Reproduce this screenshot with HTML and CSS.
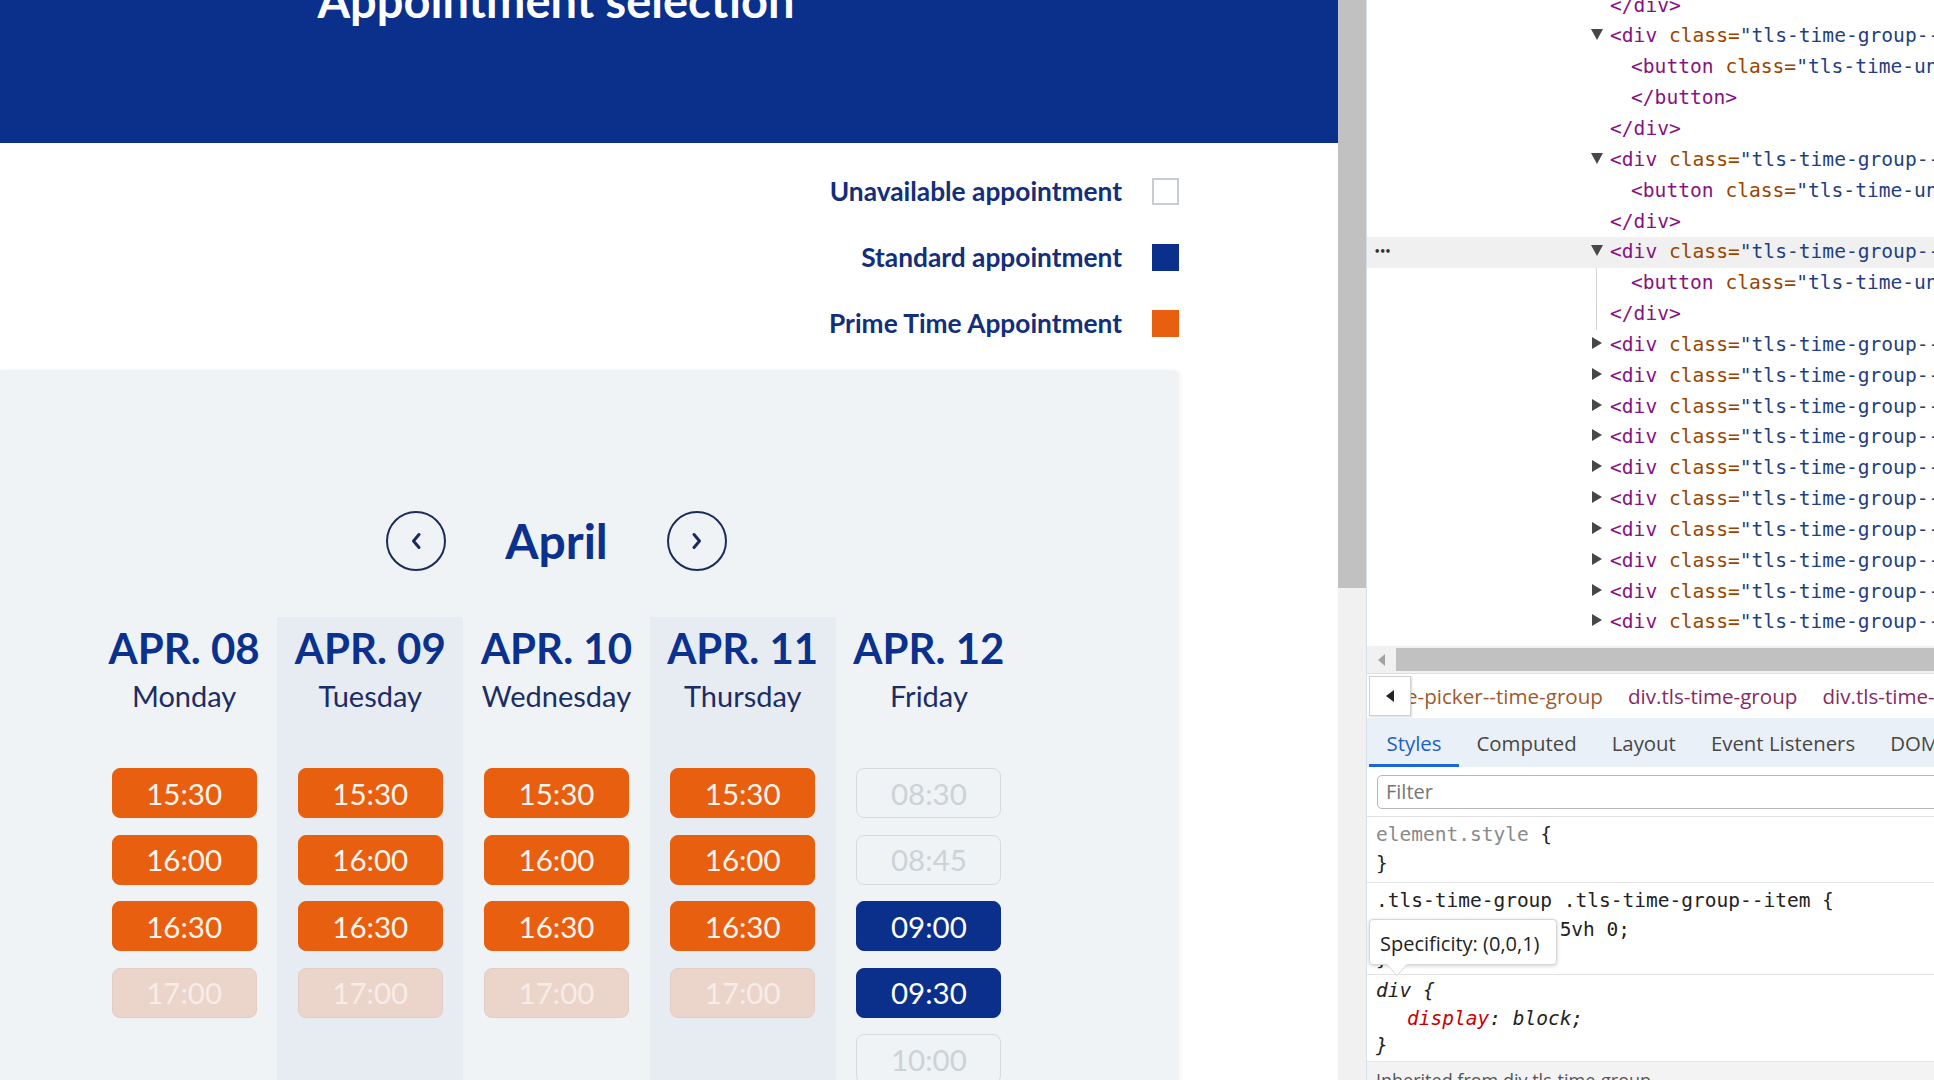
FILE: index.html
```html
<!DOCTYPE html>
<html lang="en">
<head>
<meta charset="utf-8">
<title>Appointment selection</title>
<link rel="stylesheet" href="styles.css">
</head>
<body>
<div class="site">
  <header class="header">
    <h1 class="header-title">Appointment selection</h1>
  </header>
  <div class="legend">
    <div class="legend-row"><span>Unavailable appointment</span><span class="swatch swatch-unavail"></span></div>
    <div class="legend-row"><span>Standard appointment</span><span class="swatch swatch-standard"></span></div>
    <div class="legend-row"><span>Prime Time Appointment</span><span class="swatch swatch-prime"></span></div>
  </div>
  <section class="panel">
    <div class="panel-inner">
      <div class="month-nav">
        <button class="nav-btn" aria-label="Previous month"><svg width="14" height="20" viewBox="0 0 14 20"><polyline points="10,3.5 4.5,10 10,16.5" fill="none" stroke="#1b2a5c" stroke-width="3" stroke-linecap="round" stroke-linejoin="round"/></svg></button>
        <div class="month">April</div>
        <button class="nav-btn" aria-label="Next month"><svg width="14" height="20" viewBox="0 0 14 20"><polyline points="4,3.5 9.5,10 4,16.5" fill="none" stroke="#1b2a5c" stroke-width="3" stroke-linecap="round" stroke-linejoin="round"/></svg></button>
      </div>
      <div class="days">
        <div class="day">
          <div class="date">APR. 08</div>
          <div class="weekday">Monday</div>
          <div class="slots">
            <button class="slot prime">15:30</button>
            <button class="slot prime">16:00</button>
            <button class="slot prime">16:30</button>
            <button class="slot prime-off">17:00</button>
          </div>
        </div>
        <div class="day alt">
          <div class="date">APR. 09</div>
          <div class="weekday">Tuesday</div>
          <div class="slots">
            <button class="slot prime">15:30</button>
            <button class="slot prime">16:00</button>
            <button class="slot prime">16:30</button>
            <button class="slot prime-off">17:00</button>
          </div>
        </div>
        <div class="day">
          <div class="date">APR. 10</div>
          <div class="weekday">Wednesday</div>
          <div class="slots">
            <button class="slot prime">15:30</button>
            <button class="slot prime">16:00</button>
            <button class="slot prime">16:30</button>
            <button class="slot prime-off">17:00</button>
          </div>
        </div>
        <div class="day alt">
          <div class="date">APR. 11</div>
          <div class="weekday">Thursday</div>
          <div class="slots">
            <button class="slot prime">15:30</button>
            <button class="slot prime">16:00</button>
            <button class="slot prime">16:30</button>
            <button class="slot prime-off">17:00</button>
          </div>
        </div>
        <div class="day">
          <div class="date">APR. 12</div>
          <div class="weekday">Friday</div>
          <div class="slots">
            <button class="slot unavail">08:30</button>
            <button class="slot unavail">08:45</button>
            <button class="slot standard">09:00</button>
            <button class="slot standard">09:30</button>
            <button class="slot unavail">10:00</button>
          </div>
        </div>
      </div>
    </div>
  </section>
</div>

<div class="vscroll"><div class="vthumb"></div></div>

<aside class="devtools">
  <div class="dom">
    <div class="dom-lines">
      <div class="row"><span class="t">&lt;/div&gt;</span></div>
      <div class="row tw"><span class="tri down"></span><span class="t">&lt;div</span> <span class="a">class</span><span class="a">=</span><span class="v">"tls-time-group--item"</span><span class="t">&gt;</span></div>
      <div class="row child"><span class="t">&lt;button</span> <span class="a">class</span><span class="a">=</span><span class="v">"tls-time-unit"</span><span class="t">&gt;</span></div>
      <div class="row child"><span class="t">&lt;/button&gt;</span></div>
      <div class="row"><span class="t">&lt;/div&gt;</span></div>
      <div class="row tw"><span class="tri down"></span><span class="t">&lt;div</span> <span class="a">class</span><span class="a">=</span><span class="v">"tls-time-group--item"</span><span class="t">&gt;</span></div>
      <div class="row child"><span class="t">&lt;button</span> <span class="a">class</span><span class="a">=</span><span class="v">"tls-time-unit"</span><span class="t">&gt;</span></div>
      <div class="row"><span class="t">&lt;/div&gt;</span></div>
      <div class="row tw sel"><span class="dots">•••</span><span class="tri down"></span><span class="t">&lt;div</span> <span class="a">class</span><span class="a">=</span><span class="v">"tls-time-group--item"</span><span class="t">&gt;</span></div>
      <div class="dom-children">
        <div class="row child"><span class="t">&lt;button</span> <span class="a">class</span><span class="a">=</span><span class="v">"tls-time-unit"</span><span class="t">&gt;</span></div>
        <div class="row"><span class="t">&lt;/div&gt;</span></div>
      </div>
      <div class="row tw"><span class="tri right"></span><span class="t">&lt;div</span> <span class="a">class</span><span class="a">=</span><span class="v">"tls-time-group--item"</span><span class="t">&gt;</span></div>
      <div class="row tw"><span class="tri right"></span><span class="t">&lt;div</span> <span class="a">class</span><span class="a">=</span><span class="v">"tls-time-group--item"</span><span class="t">&gt;</span></div>
      <div class="row tw"><span class="tri right"></span><span class="t">&lt;div</span> <span class="a">class</span><span class="a">=</span><span class="v">"tls-time-group--item"</span><span class="t">&gt;</span></div>
      <div class="row tw"><span class="tri right"></span><span class="t">&lt;div</span> <span class="a">class</span><span class="a">=</span><span class="v">"tls-time-group--item"</span><span class="t">&gt;</span></div>
      <div class="row tw"><span class="tri right"></span><span class="t">&lt;div</span> <span class="a">class</span><span class="a">=</span><span class="v">"tls-time-group--item"</span><span class="t">&gt;</span></div>
      <div class="row tw"><span class="tri right"></span><span class="t">&lt;div</span> <span class="a">class</span><span class="a">=</span><span class="v">"tls-time-group--item"</span><span class="t">&gt;</span></div>
      <div class="row tw"><span class="tri right"></span><span class="t">&lt;div</span> <span class="a">class</span><span class="a">=</span><span class="v">"tls-time-group--item"</span><span class="t">&gt;</span></div>
      <div class="row tw"><span class="tri right"></span><span class="t">&lt;div</span> <span class="a">class</span><span class="a">=</span><span class="v">"tls-time-group--item"</span><span class="t">&gt;</span></div>
      <div class="row tw"><span class="tri right"></span><span class="t">&lt;div</span> <span class="a">class</span><span class="a">=</span><span class="v">"tls-time-group--item"</span><span class="t">&gt;</span></div>
      <div class="row tw"><span class="tri right"></span><span class="t">&lt;div</span> <span class="a">class</span><span class="a">=</span><span class="v">"tls-time-group--item"</span><span class="t">&gt;</span></div>
    </div>
  </div>
  <div class="hscroll"><span class="harrow"></span><span class="hthumb"></span></div>
  <div class="crumbs">
    <button class="crumb-back"><span class="crumb-tri"></span></button>
    <div class="crumb-list">
      <span class="crumb c-cls">e-picker--time-group</span>
      <span class="crumb c-tag">div.tls-time-group</span>
      <span class="crumb c-tag">div.tls-time-group--item</span>
    </div>
  </div>
  <nav class="tabs">
    <span class="tab active">Styles</span>
    <span class="tab">Computed</span>
    <span class="tab">Layout</span>
    <span class="tab">Event Listeners</span>
    <span class="tab">DOM Breakpoints</span>
  </nav>
  <div class="filter-wrap"><div class="filter">Filter</div></div>
  <div class="rules">
    <div class="rule">
      <div class="ln"><span class="sel-gray">element.style</span> {</div>
      <div class="ln">}</div>
    </div>
    <div class="rule rule-tip">
      <div class="ln">.tls-time-group .tls-time-group--item {</div>
      <div class="ln prop-ln"><span class="pn">margin</span>: 0 0 .5vh 0;</div>
      <div class="ln">}</div>
      <div class="tooltip">Specificity: (0,0,1)</div>
    </div>
    <div class="rule ua">
      <div class="ln">div {</div>
      <div class="ln prop-ln"><span class="pn">display</span>: block;</div>
      <div class="ln">}</div>
    </div>
    <div class="inherited">Inherited from div.tls-time-group</div>
  </div>
</aside>
</body>
</html>
```

FILE: styles.css
```css
* { box-sizing: border-box; }

html, body {
  margin: 0;
  width: 1934px;
  height: 1080px;
  overflow: hidden;
  background: #fff;
}

body {
  display: flex;
}

/* ---------- page ---------- */
.site {
  width: 1338px;
  flex: none;
  height: 1080px;
  overflow: hidden;
  background: #fff;
  font-family: Lato, "Open Sans", sans-serif;
}

.header {
  height: 143px;
  background: #0a308c;
  overflow: hidden;
}

.header-title {
  width: 1112px;
  margin: -23px 0 0;
  text-align: center;
  color: #fff;
  font-size: 47px;
  line-height: 47px;
  font-weight: 700;
}

.legend {
  width: 1179px;
  padding-top: 28px;
  display: flex;
  flex-direction: column;
  align-items: flex-end;
  gap: 26px;
}

.legend-row {
  height: 40px;
  display: flex;
  align-items: center;
  gap: 30px;
  font-size: 26.3px;
  font-weight: 700;
  color: #132e7a;
}

.swatch {
  width: 27px;
  height: 27px;
  flex: none;
}
.swatch-unavail { border: 2px solid #c8cdd2; background: #fff; }
.swatch-standard { background: #0a308c; }
.swatch-prime { background: #e8600f; }

.panel {
  margin-top: 27px;
  width: 1179px;
  height: 720px;
  background: #eff3f5;
  border-radius: 0 6px 0 0;
  box-shadow: 2px 0 4px rgba(0, 0, 0, 0.04);
  padding-top: 141px;
}

.panel-inner {
  width: 931px;
  margin-left: 91px;
}

.month-nav {
  display: flex;
  justify-content: center;
  align-items: center;
  gap: 59px;
  height: 60px;
}

.nav-btn {
  width: 60px;
  height: 60px;
  padding: 0;
  border-radius: 50%;
  border: 2px solid #1d2b59;
  background: transparent;
  display: flex;
  align-items: center;
  justify-content: center;
}

.month {
  font-size: 48px;
  line-height: 60px;
  font-weight: 700;
  color: #0b318f;
}

.days {
  margin-top: 46px;
  display: grid;
  grid-template-columns: repeat(5, 1fr);
}

.day {
  height: 480px;
  padding-top: 6px;
  display: flex;
  flex-direction: column;
  align-items: center;
}
.day.alt { background: #e6ecf1; }

.date {
  font-size: 42px;
  line-height: 50px;
  font-weight: 700;
  color: #0b318f;
}

.weekday {
  margin-top: 3px;
  font-size: 29px;
  line-height: 40px;
  color: #1c2d66;
}

.slots {
  margin-top: 52px;
  display: flex;
  flex-direction: column;
  gap: 16.5px;
}

.slot {
  width: 145px;
  height: 50px;
  border-radius: 8px;
  border: 1.5px solid transparent;
  padding: 0;
  font-family: Lato, sans-serif;
  font-size: 29.5px;
  display: flex;
  align-items: center;
  justify-content: center;
}

.slot.prime { background: #e8600f; color: #fff5ee; border-color: #e8600f; }
.slot.prime-off { background: #ebd4ca; color: #f7ece7; border-color: #e2cdc4; }
.slot.standard { background: #0a308c; color: #fff; border-color: #0a308c; }
.slot.unavail { background: transparent; color: #cdd2d7; border-color: #d6dbdf; }

/* ---------- page scrollbar ---------- */
.vscroll {
  width: 29px;
  flex: none;
  background: #f1f1f1;
  border-right: 1px solid #d6dfea;
}
.vthumb {
  height: 588px;
  background: #c1c1c1;
}

/* ---------- devtools ---------- */
.devtools {
  flex: 1;
  min-width: 0;
  height: 1080px;
  overflow: hidden;
  background: #fff;
  font-family: "Open Sans", "Noto Sans", sans-serif;
  color: #333;
}

.dom {
  height: 646px;
  overflow: hidden;
}

.dom-lines {
  margin-top: -9.4px;
  font-family: "DejaVu Sans Mono", "Liberation Mono", monospace;
  font-size: 19.6px;
}

.row {
  height: 30.85px;
  line-height: 30.85px;
  padding-left: 243px;
  white-space: pre;
  overflow: hidden;
}
.row.tw { padding-left: 224px; }
.row.child { padding-left: 264px; }
.row.sel { background: #f0f0f0; padding-left: 0; }

.dots {
  display: inline-block;
  width: 224px;
  padding-left: 7px;
  font-family: "DejaVu Sans", sans-serif;
  font-size: 10px;
  font-weight: 700;
  letter-spacing: -1px;
  color: #333;
  vertical-align: top;
}

.tri {
  display: inline-block;
  width: 19px;
  height: 30px;
  vertical-align: top;
  position: relative;
}
.tri::before {
  content: "";
  position: absolute;
  border-style: solid;
}
.tri.down::before {
  left: 0;
  top: 8px;
  border-width: 11px 6px 0 6px;
  border-color: #474747 transparent transparent transparent;
}
.tri.right::before {
  left: 1px;
  top: 7px;
  border-width: 6.5px 0 6.5px 10px;
  border-color: transparent transparent transparent #474747;
}

.t { color: #881280; }
.a { color: #994500; }
.v { color: #1f3f82; }

.dom-children {
  background: linear-gradient(#d4d4d4, #d4d4d4) no-repeat 229px 0 / 1px 100%;
}

.hscroll {
  height: 27px;
  background: #f1f1f1;
  display: flex;
  align-items: stretch;
}
.harrow {
  width: 29px;
  flex: none;
  display: flex;
  align-items: center;
  justify-content: center;
}
.harrow::before {
  content: "";
  border-style: solid;
  border-width: 6px 7px 6px 0;
  border-color: transparent #a3a3a3 transparent transparent;
}
.hthumb {
  flex: 1;
  margin: 2px 0 2px 0;
  background: #c1c1c1;
}

.crumbs {
  height: 45px;
  display: flex;
  align-items: center;
  background: #fff;
  border-top: 1px solid #e0e0e0;
  overflow: hidden;
}
.crumb-back {
  position: relative;
  z-index: 1;
  width: 42px;
  height: 40px;
  margin-left: 2px;
  flex: none;
  background: #fff;
  border: 1px solid #cfcfcf;
  box-shadow: 1px 1px 2px rgba(0,0,0,.15);
  display: flex;
  align-items: center;
  justify-content: center;
  padding: 0;
}
.crumb-tri {
  border-style: solid;
  border-width: 6px 8px 6px 0;
  border-color: transparent #222 transparent transparent;
}
.crumb-list {
  display: flex;
  gap: 25px;
  margin-left: -5px;
  white-space: nowrap;
  font-size: 20.6px;
}
.c-cls { color: #a0582a; }
.c-tag { color: #862a62; }

.tabs {
  height: 49px;
  background: #eaf0f7;
  display: flex;
  align-items: stretch;
  padding-left: 2px;
  white-space: nowrap;
  font-size: 20.4px;
  color: #474747;
}
.tab {
  padding: 4px 17.5px 0;
  display: flex;
  align-items: center;
  border-bottom: 3px solid transparent;
}
.tab.active {
  color: #1b5fc7;
  border-bottom-color: #1a68d8;
}

.filter-wrap {
  padding: 8px 0 7px 10px;
  border-bottom: 1px solid #e1e1e1;
}
.filter {
  height: 34px;
  width: 700px;
  border: 1px solid #b7b7b7;
  border-radius: 5px;
  padding-left: 8px;
  line-height: 32px;
  font-size: 20px;
  color: #767676;
}

.rules {
  font-family: "DejaVu Sans Mono", "Liberation Mono", monospace;
  font-size: 19.5px;
  color: #222;
}
.rule {
  padding: 2.5px 0 1px 9px;
  border-bottom: 1px solid #e4e4e4;
}
.rule:first-child {
  padding-top: 2.5px;
  padding-bottom: 4.5px;
}
.ln {
  height: 29px;
  line-height: 29px;
  white-space: pre;
}
.ua .ln {
  font-style: italic;
  height: 27.5px;
  line-height: 27.5px;
}
.prop-ln { padding-left: 31px; }
.sel-gray { color: #8a8a8a; }
.pn { color: #c80000; }

.rule-tip { position: relative; }
.tooltip {
  position: absolute;
  left: 2px;
  top: 36px;
  width: 188px;
  height: 46px;
  background: #fff;
  border: 1px solid #d6d6d6;
  border-radius: 4px;
  box-shadow: 0 1px 4px rgba(0,0,0,.18);
  font-family: "Open Sans", "Noto Sans", sans-serif;
  font-size: 20px;
  line-height: 48px;
  padding-left: 10px;
  color: #222;
  font-style: normal;
  white-space: nowrap;
}
.tooltip::after {
  content: "";
  position: absolute;
  left: 17px;
  bottom: -11px;
  border-style: solid;
  border-width: 11px 10px 0 10px;
  border-color: #fff transparent transparent transparent;
  filter: drop-shadow(0 1px 0 #d0d0d0);
}

.inherited {
  height: 40px;
  padding: 6px 0 0 9px;
  background: #f3f3f3;
  font-family: "Open Sans", sans-serif;
  font-size: 18px;
  color: #555;
}
```
